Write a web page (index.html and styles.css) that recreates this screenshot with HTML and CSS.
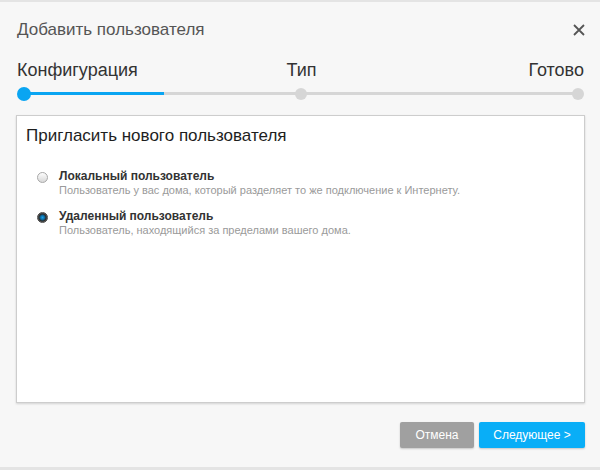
FILE: index.html
```html
<!DOCTYPE html>
<html lang="ru">
<head>
    <meta charset="UTF-8">
    <title>Добавить пользователя</title>
    <link rel="stylesheet" href="styles.css">
</head>
<body>
    <div class="dialog">
        <div class="dialog-header">
            <div class="dialog-title">Добавить пользователя</div>
            <button class="close-btn" aria-label="Закрыть">
                <svg width="12" height="12" viewBox="0 0 12 12">
                    <path d="M1 1L11 11M11 1L1 11" stroke="#555" stroke-width="1.8" fill="none"/>
                </svg>
            </button>
        </div>

        <div class="steps">
            <div class="step-labels">
                <span class="step-first">Конфигурация</span>
                <span class="step-mid">Тип</span>
                <span class="step-last">Готово</span>
            </div>
            <div class="track">
                <div class="track-fill"></div>
                <span class="dot dot-active dot-first"></span>
                <span class="dot dot-mid"></span>
                <span class="dot dot-last"></span>
            </div>
        </div>

        <div class="panel">
            <h2 class="panel-title">Пригласить нового пользователя</h2>
            <label class="option">
                <input type="radio" name="usertype">
                <span class="option-text">
                    <span class="option-name">Локальный пользователь</span>
                    <span class="option-desc">Пользователь у вас дома, который разделяет то же подключение к Интернету.</span>
                </span>
            </label>
            <label class="option">
                <input type="radio" name="usertype" checked>
                <span class="option-text">
                    <span class="option-name">Удаленный пользователь</span>
                    <span class="option-desc">Пользователь, находящийся за пределами вашего дома.</span>
                </span>
            </label>
        </div>

        <div class="dialog-footer">
            <button class="btn btn-cancel">Отмена</button>
            <button class="btn btn-next">Следующее &gt;</button>
        </div>
    </div>
</body>
</html>
```

FILE: styles.css
```css
body {
    margin: 0;
    background: #ffffff;
    font-family: "Liberation Sans", Arial, sans-serif;
}
.dialog {
    width: 600px;
    height: 470px;
    box-sizing: border-box;
    background: #f7f7f7;
    border-top: 2px solid #e4e4e4;
    border-bottom: 3px solid #e4e4e4;
    padding: 0 15px 0 16px;
    display: flex;
    flex-direction: column;
}
.dialog-header {
    display: flex;
    justify-content: space-between;
    align-items: center;
    height: 56px;
    padding-left: 1px;
}
.dialog-title {
    font-size: 17px;
    color: #555;
}
.close-btn {
    background: none;
    border: none;
    padding: 0;
    cursor: pointer;
    display: flex;
}
.steps {
    padding: 0 1px;
}
.step-labels {
    display: grid;
    grid-template-columns: 1fr auto 1fr;
    font-size: 18px;
    color: #333;
    height: 24px;
    line-height: 24px;
}
.step-mid {
    margin-left: 2px;
}
.step-last {
    text-align: right;
}
.track {
    position: relative;
    height: 3px;
    background: #d6d6d6;
    margin: 10px 6px 0 7px;
}
.track-fill {
    width: 140px;
    height: 100%;
    background: #0aa5f2;
}
.dot {
    position: absolute;
    top: 50%;
    width: 12px;
    height: 12px;
    border-radius: 50%;
    background: #d6d6d6;
    transform: translate(-50%, -50%);
}
.dot-active {
    width: 14px;
    height: 14px;
    background: #0aa5f2;
}
.dot-first { left: 0; }
.dot-mid { left: 50%; }
.dot-last { left: 100%; }
.panel {
    margin-top: 20px;
    height: 288px;
    box-sizing: border-box;
    background: #fff;
    border: 1px solid #cdcdcd;
    box-shadow: 0 1px 2px rgba(0, 0, 0, 0.15);
    padding: 10px 9px;
}
.panel-title {
    margin: 0 0 23px;
    font-size: 17px;
    font-weight: normal;
    color: #1e1e1e;
}
.option {
    display: flex;
    align-items: flex-start;
    margin-left: 11px;
    margin-bottom: 12px;
}
.option input {
    appearance: none;
    -webkit-appearance: none;
    box-sizing: border-box;
    margin: 3px 11px 0 0;
    width: 11px;
    height: 11px;
    border-radius: 50%;
    border: 1px solid #a8a8a8;
    background: linear-gradient(#fdfdfd, #d8d8d8);
    flex-shrink: 0;
}
.option input:checked {
    border-color: #4a4a4a;
    background: radial-gradient(circle, #1ea0e6 0, #0b6fa8 2px, #2a2a2a 3.5px, #6a6a6a 5px);
}
.option-text {
    display: flex;
    flex-direction: column;
}
.option-name {
    font-size: 12px;
    font-weight: bold;
    color: #333;
    line-height: 14px;
}
.option-desc {
    font-size: 11px;
    color: #9a9a9a;
    line-height: 14px;
}
.dialog-footer {
    display: flex;
    justify-content: flex-end;
    gap: 5px;
    margin-top: 19px;
}
.btn {
    height: 26px;
    border: none;
    border-radius: 2px;
    color: #fff;
    font-family: "Liberation Sans", Arial, sans-serif;
    font-size: 12px;
    cursor: pointer;
    box-shadow: 0 1px 2px rgba(0, 0, 0, 0.2);
}
.btn-cancel {
    width: 74px;
    background: #a0a0a0;
}
.btn-next {
    width: 106px;
    background: #09aef7;
}
```
